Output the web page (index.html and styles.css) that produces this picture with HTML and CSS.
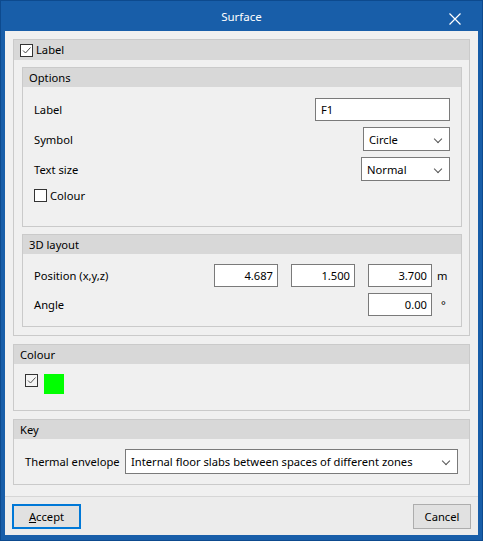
FILE: index.html
```html
<!DOCTYPE html>
<html>
<head>
<meta charset="utf-8">
<link rel="stylesheet" href="styles.css">
</head>
<body>
<div class="window">
  <div class="titlebar">
    <span class="title">Surface</span>
    <svg class="close" width="12" height="12" viewBox="0 0 12 12"><path d="M0.5 0.5 L11.5 11.5 M11.5 0.5 L0.5 11.5" stroke="#fff" stroke-width="1.2" fill="none"/></svg>
  </div>
  <div class="client">
    <div class="content">
      <div class="group outer">
        <div class="ghead chead">
          <span class="cb checked"><svg width="11" height="11" viewBox="0 0 11 11"><path d="M2 5.5 L4.5 8 L9.5 2.5" stroke="#444" stroke-width="1" fill="none"/></svg></span>
          <span>Label</span>
        </div>
        <div class="gbody outer-body">
          <div class="group sub">
            <div class="ghead sub-head">Options</div>
            <div class="gbody options-body">
              <div class="row r30"><span class="lbl">Label</span><span class="input wide">F1</span></div>
              <div class="row r30"><span class="lbl">Symbol</span><span class="select w87">Circle<i class="chev"></i></span></div>
              <div class="row r30"><span class="lbl">Text size</span><span class="select w89">Normal<i class="chev"></i></span></div>
              <div class="row r22"><span class="cb"></span><span class="cbl">Colour</span></div>
            </div>
          </div>
          <div class="group sub layout">
            <div class="ghead sub-head">3D layout</div>
            <div class="gbody layout-body">
              <div class="row r29"><span class="lbl">Position (x,y,z)</span>
                <div class="nums">
                  <span class="input num">4.687</span>
                  <span class="input num">1.500</span>
                  <span class="input num">3.700</span>
                  <span class="unit">m</span>
                </div>
              </div>
              <div class="row r29"><span class="lbl">Angle</span>
                <div class="nums">
                  <span class="input num">0.00</span>
                  <span class="unit deg">°</span>
                </div>
              </div>
            </div>
          </div>
        </div>
      </div>
      <div class="group top">
        <div class="ghead plain-head">Colour</div>
        <div class="gbody colour-body">
          <span class="cb checked small"><svg width="11" height="11" viewBox="0 0 11 11"><path d="M2 5.5 L4.5 8 L9.5 2.5" stroke="#555" stroke-width="1" fill="none"/></svg></span>
          <span class="swatch"></span>
        </div>
      </div>
      <div class="group top">
        <div class="ghead plain-head">Key</div>
        <div class="gbody key-body">
          <span class="lbl2">Thermal envelope</span>
          <span class="select long">Internal floor slabs between spaces of different zones<i class="chev"></i></span>
        </div>
      </div>
    </div>
    <div class="footer">
      <button class="btn accept"><u>A</u>ccept</button>
      <button class="btn cancel">Cancel</button>
    </div>
  </div>
</div>
</body>
</html>
```
FILE: styles.css
```css
* { box-sizing: border-box; }
html, body { margin: 0; padding: 0; }
body {
  font-family: "Noto Sans", "Open Sans", sans-serif;
  font-size: 11.2px;
  color: #000;
  background: #fff;
}
.window {
  width: 483px;
  height: 541px;
  background: #185ea9;
  border: 1px solid #0d4a8e;
  padding: 0 4px 5px 4px;
  display: flex;
  flex-direction: column;
}
.titlebar {
  height: 30px;
  position: relative;
  display: flex;
  align-items: center;
  justify-content: center;
  color: #fff;
}
.title { font-size: 11.5px; margin-top: 1px; }
.close { position: absolute; right: 17px; top: 12px; }
.client {
  flex: 1;
  background: #f0f0f0;
  display: flex;
  flex-direction: column;
}
.content {
  flex: 1;
  padding: 8px 8px 8px 8px;
  display: flex;
  flex-direction: column;
}
.group {
  border: 1px solid #cacaca;
  display: flex;
  flex-direction: column;
}
.ghead {
  background: #d8d8d8;
  height: 19px;
  display: flex;
  align-items: center;
  line-height: 1;
}
.chead { padding-left: 6px; height: 20px; }
.chead .cb { margin-right: 3px; }
.sub-head { padding-left: 6px; }
.plain-head { padding-left: 6px; }
.top { margin-top: 8px; }
.outer-body { padding: 7px 7px 8px 8px; }
.layout { margin-top: 7px; }
.options-body { padding: 7px 11px 20px 11px; }
.layout-body { padding: 7px 11px 7px 11px; }
.row {
  display: flex;
  align-items: center;
  justify-content: space-between;
}
.r30 { height: 30px; }
.r29 { height: 29px; }
.r22 { height: 22px; justify-content: flex-start; }
.cb {
  width: 13px;
  height: 13px;
  border: 1px solid #333;
  background: #fff;
  display: inline-flex;
  align-items: center;
  justify-content: center;
  flex: none;
}
.cbl { margin-left: 3px; }
.input {
  height: 23px;
  background: #fff;
  border: 1px solid #7a7a7a;
  display: flex;
  align-items: center;
  padding: 0 5px;
}
.wide { width: 135px; }
.select {
  height: 24px;
  background: #fff;
  border: 1px solid #7a7a7a;
  display: flex;
  align-items: center;
  padding: 0 0 0 5px;
  position: relative;
}
.w87 { width: 87px; }
.w89 { width: 89px; }
.chev {
  position: absolute;
  right: 8px;
  top: 8px;
  width: 6px;
  height: 6px;
  border-right: 1px solid #555;
  border-bottom: 1px solid #555;
  transform: rotate(45deg);
}
.nums { display: flex; align-items: center; }
.num { width: 64px; justify-content: flex-end; padding-right: 4px; margin-left: 13px; }
.unit { width: 18px; padding-left: 5px; }
.deg { padding-left: 9px; }
.colour-body {
  padding: 10px 0 16px 11px;
  display: flex;
  align-items: flex-start;
}
.colour-body .cb { background: #f4f4f4; border-color: #333; }
.swatch {
  width: 20px;
  height: 20px;
  background: #00ff00;
  margin-left: 6px;
}
.key-body {
  padding: 10px 11px 10px 11px;
  display: flex;
  align-items: center;
}
.lbl2 { width: 100px; flex: none; }
.long { flex: 1; height: 25px; }
.long .chev { top: 8px; }
.footer {
  height: 39px;
  border-top: 1px solid #d6d6d6;
  background: #ececec;
  display: flex;
  justify-content: space-between;
  align-items: flex-start;
  padding: 7px 7px 0 7px;
}
.btn {
  font-family: inherit;
  font-size: 11.2px;
  height: 25px;
  background: #e1e1e1;
  border: 1px solid #adadad;
  color: #000;
  padding: 0;
}
.accept { width: 69px; border: 2px solid #0078d7; }
.cancel { width: 58px; }
```
